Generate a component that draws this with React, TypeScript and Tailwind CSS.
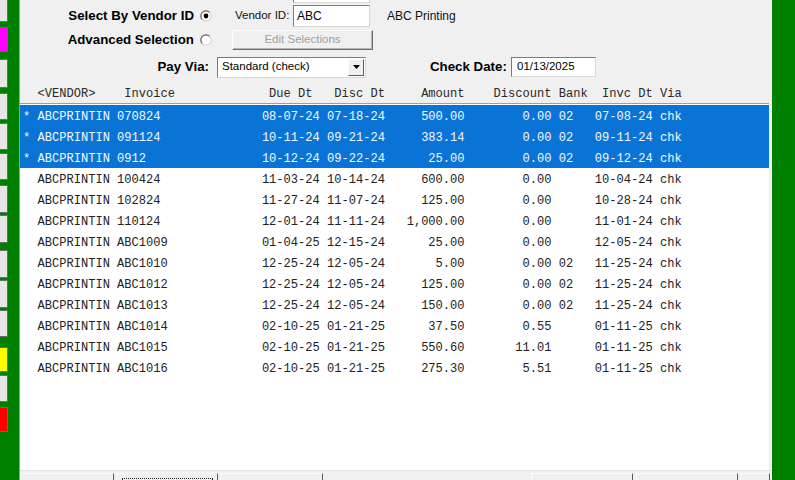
import React from 'react';

type Invoice = {
  sel?: boolean;
  inv: string;
  due: string;
  disc: string;
  amt: string;
  dsc: string;
  bank?: string;
  invc: string;
};

const invoices: Invoice[] = [
  { sel: true, inv: '070824', due: '08-07-24', disc: '07-18-24', amt: '500.00', dsc: '0.00', bank: '02', invc: '07-08-24' },
  { sel: true, inv: '091124', due: '10-11-24', disc: '09-21-24', amt: '383.14', dsc: '0.00', bank: '02', invc: '09-11-24' },
  { sel: true, inv: '0912', due: '10-12-24', disc: '09-22-24', amt: '25.00', dsc: '0.00', bank: '02', invc: '09-12-24' },
  { inv: '100424', due: '11-03-24', disc: '10-14-24', amt: '600.00', dsc: '0.00', invc: '10-04-24' },
  { inv: '102824', due: '11-27-24', disc: '11-07-24', amt: '125.00', dsc: '0.00', invc: '10-28-24' },
  { inv: '110124', due: '12-01-24', disc: '11-11-24', amt: '1,000.00', dsc: '0.00', invc: '11-01-24' },
  { inv: 'ABC1009', due: '01-04-25', disc: '12-15-24', amt: '25.00', dsc: '0.00', invc: '12-05-24' },
  { inv: 'ABC1010', due: '12-25-24', disc: '12-05-24', amt: '5.00', dsc: '0.00', bank: '02', invc: '11-25-24' },
  { inv: 'ABC1012', due: '12-25-24', disc: '12-05-24', amt: '125.00', dsc: '0.00', bank: '02', invc: '11-25-24' },
  { inv: 'ABC1013', due: '12-25-24', disc: '12-05-24', amt: '150.00', dsc: '0.00', bank: '02', invc: '11-25-24' },
  { inv: 'ABC1014', due: '02-10-25', disc: '01-21-25', amt: '37.50', dsc: '0.55', invc: '01-11-25' },
  { inv: 'ABC1015', due: '02-10-25', disc: '01-21-25', amt: '550.60', dsc: '11.01', invc: '01-11-25' },
  { inv: 'ABC1016', due: '02-10-25', disc: '01-21-25', amt: '275.30', dsc: '5.51', invc: '01-11-25' },
];

// fixed-width listbox line, same column layout as the header
function line(r: Invoice) {
  return (
    (r.sel ? '* ' : '  ') +
    'ABCPRINTIN ' +
    r.inv.padEnd(20) +
    r.due + ' ' + r.disc +
    r.amt.padStart(11) +
    r.dsc.padStart(12) +
    ' ' + (r.bank ?? '').padEnd(2) + '   ' +
    r.invc + ' chk'
  );
}

function placeAt(parts: [number, string][]) {
  let s = '';
  for (const [col, text] of parts) s = s.padEnd(col) + text;
  return '  ' + s;
}

const header = placeAt([
  [0, '<VENDOR>'],
  [12, 'Invoice'],
  [32, 'Due Dt'],
  [41, 'Disc Dt'],
  [53, 'Amount'],
  [63, 'Discount'],
  [72, 'Bank'],
  [78, 'Invc Dt'],
  [86, 'Via'],
]);

// colour keys down the left edge of the window
const sideKeys = [
  '-mt-[2px] h-[24px] bg-[#e6e6e6]',
  'mt-[5px] h-[25px] bg-[#ff00ff]',
  'mt-[7px] h-[29px] bg-[#e6e6e6]',
  'mt-[5px] h-[27px] bg-[#e6e6e6]',
  'mt-[3px] h-[27px] bg-[#e6e6e6]',
  'mt-[3px] h-[27px] bg-[#e6e6e6]',
  'mt-[5px] h-[28px] bg-[#e6e6e6]',
  'mt-[2px] h-[28px] bg-[#e6e6e6]',
  'mt-[7px] h-[28px] bg-[#e6e6e6]',
  'mt-[2px] h-[28px] bg-[#e6e6e6]',
  'mt-[2px] h-[27px] bg-[#e6e6e6]',
  'mt-[10px] h-[25px] bg-[#ffff00]',
  'mt-[3px] h-[27px] bg-[#e6e6e6]',
  'mt-[5px] h-[25px] bg-[#ff0000]',
];

function Radio({ checked }: { checked?: boolean }) {
  return (
    <svg width="12" height="12" viewBox="0 0 12 12" className="shrink-0">
      <circle cx="6" cy="6" r="5.2" fill="#fff" />
      <path d="M2.32 9.68 A5.2 5.2 0 0 1 9.68 2.32" stroke="#5e5e5e" strokeWidth="1.2" fill="none" />
      <path d="M9.68 2.32 A5.2 5.2 0 0 1 2.32 9.68" stroke="#d4d4d4" strokeWidth="1.2" fill="none" />
      {checked && <circle cx="6" cy="6" r="2.4" fill="#000" />}
    </svg>
  );
}

const bold = "font-['Liberation_Sans',Arial,sans-serif] font-bold text-[13.3px] text-black";
const sunken = 'border border-t-[#7a7a7a] border-l-[#7a7a7a] border-r-[#d8d8d8] border-b-[#d8d8d8] bg-white';
const raised = 'border border-t-[#fcfcfc] border-l-[#fcfcfc] border-r-[#5f5f5f] border-b-[#5f5f5f] bg-[#f0f0f0]';

export default function App() {
  return (
    <div className="flex h-[480px] w-[795px] overflow-hidden bg-[#008000] font-['Liberation_Sans',Arial,sans-serif] text-[11.5px]">
      {/* left key strip */}
      <div className="flex w-[19px] shrink-0 flex-col">
        {sideKeys.map((k, i) => (
          <div key={i} className={`w-[8px] shrink-0 border-y border-r border-[#6b6b6b] ${k}`} />
        ))}
      </div>

      {/* dialog body */}
      <div className="flex w-[753px] shrink-0 flex-col border-l border-[#9a9a9a] bg-[#f0f0f0]">
        <div className="flex h-[3px]">
          <div className={`ml-[273px] h-[3px] w-[77px] border-t-0 ${sunken}`} />
        </div>

        <div className="mt-[2px] flex h-[22px] items-center">
          <div className="flex w-[192px] items-center justify-end gap-[6px]">
            <span className={bold}>Select By Vendor ID</span>
            <Radio checked />
          </div>
          <span className="ml-[23px] w-[58px] text-[#111]">Vendor ID:</span>
          <div className={`flex h-[22px] w-[77px] items-center pl-[3px] text-[12px] text-black ${sunken}`}>ABC</div>
          <span className="ml-[17px] text-[12px] text-[#111]">ABC Printing</span>
        </div>

        <div className="mt-[3px] flex h-[20px] items-center">
          <div className="flex w-[192px] items-center justify-end gap-[6px]">
            <span className={bold}>Advanced Selection</span>
            <Radio />
          </div>
          <div className="ml-[20px] flex h-[20px] w-[141px] items-center justify-center border border-t-[#fcfcfc] border-l-[#fcfcfc] border-r-[#6f6f6f] border-b-[#6f6f6f] bg-[#f0f0f0] text-[#a0a0a0] shadow-[inset_-1px_-1px_0_#b5b5b5]">
            Edit Selections
          </div>
        </div>

        <div className="mt-[7px] flex h-[20px] items-center">
          <div className="flex w-[189px] justify-end">
            <span className={bold}>Pay Via:</span>
          </div>
          <div className={`ml-[8px] flex h-[21px] w-[149px] items-center justify-between pl-[4px] pr-[1px] text-black ${sunken}`}>
            <span>Standard (check)</span>
            <div className={`flex h-[17px] w-[16px] items-center justify-center ${raised}`}>
              <svg width="7" height="4" viewBox="0 0 7 4">
                <path d="M0 0 H7 L3.5 4 Z" fill="#000" />
              </svg>
            </div>
          </div>
          <span className={`ml-[64px] w-[81px] ${bold}`}>Check Date:</span>
          <div className={`flex h-[20px] w-[85px] items-center pl-[5px] text-black ${sunken}`}>01/13/2025</div>
        </div>

        <div className="mt-[7px] h-[17px] whitespace-pre pl-[3px] pt-[2px] font-['Liberation_Mono','Courier_New',monospace] text-[12.07px] leading-[17px] text-[#2a2a2a]">
          {header}
        </div>

        {/* invoice listbox */}
        <div className="mr-[3px] mt-[2px] flex-1 overflow-hidden border-t border-[#7aa6d6] bg-white pt-[1px] font-['Liberation_Mono','Courier_New',monospace] text-[12.07px]">
          {invoices.map((r, i) => (
            <div
              key={i}
              className={`h-[21px] whitespace-pre pl-[3px] pt-[2px] leading-[21px] ${r.sel ? 'bg-[#0a74d6] text-[#f4f8ff]' : 'text-[#222]'}`}
            >
              {line(r)}
            </div>
          ))}
        </div>

        {/* command buttons, cut off by the window edge */}
        <div className="flex h-[10px] items-start border-t border-[#e2e2e2] pt-[2px]">
          <div className={`h-[20px] w-[94px] ${raised}`} />
          <div className={`ml-[3px] h-[20px] w-[101px] p-[4px] ${raised}`}>
            <div className="h-full w-full border border-dotted border-[#222]" />
          </div>
          <div className={`ml-[3px] h-[20px] w-[102px] ${raised}`} />
          <div className={`ml-[208px] h-[20px] w-[102px] ${raised}`} />
          <div className={`ml-[3px] h-[20px] w-[102px] ${raised}`} />
          <div className={`ml-[3px] h-[20px] w-[29px] ${raised}`} />
        </div>
      </div>

      <div className="flex-1" />
    </div>
  );
}
